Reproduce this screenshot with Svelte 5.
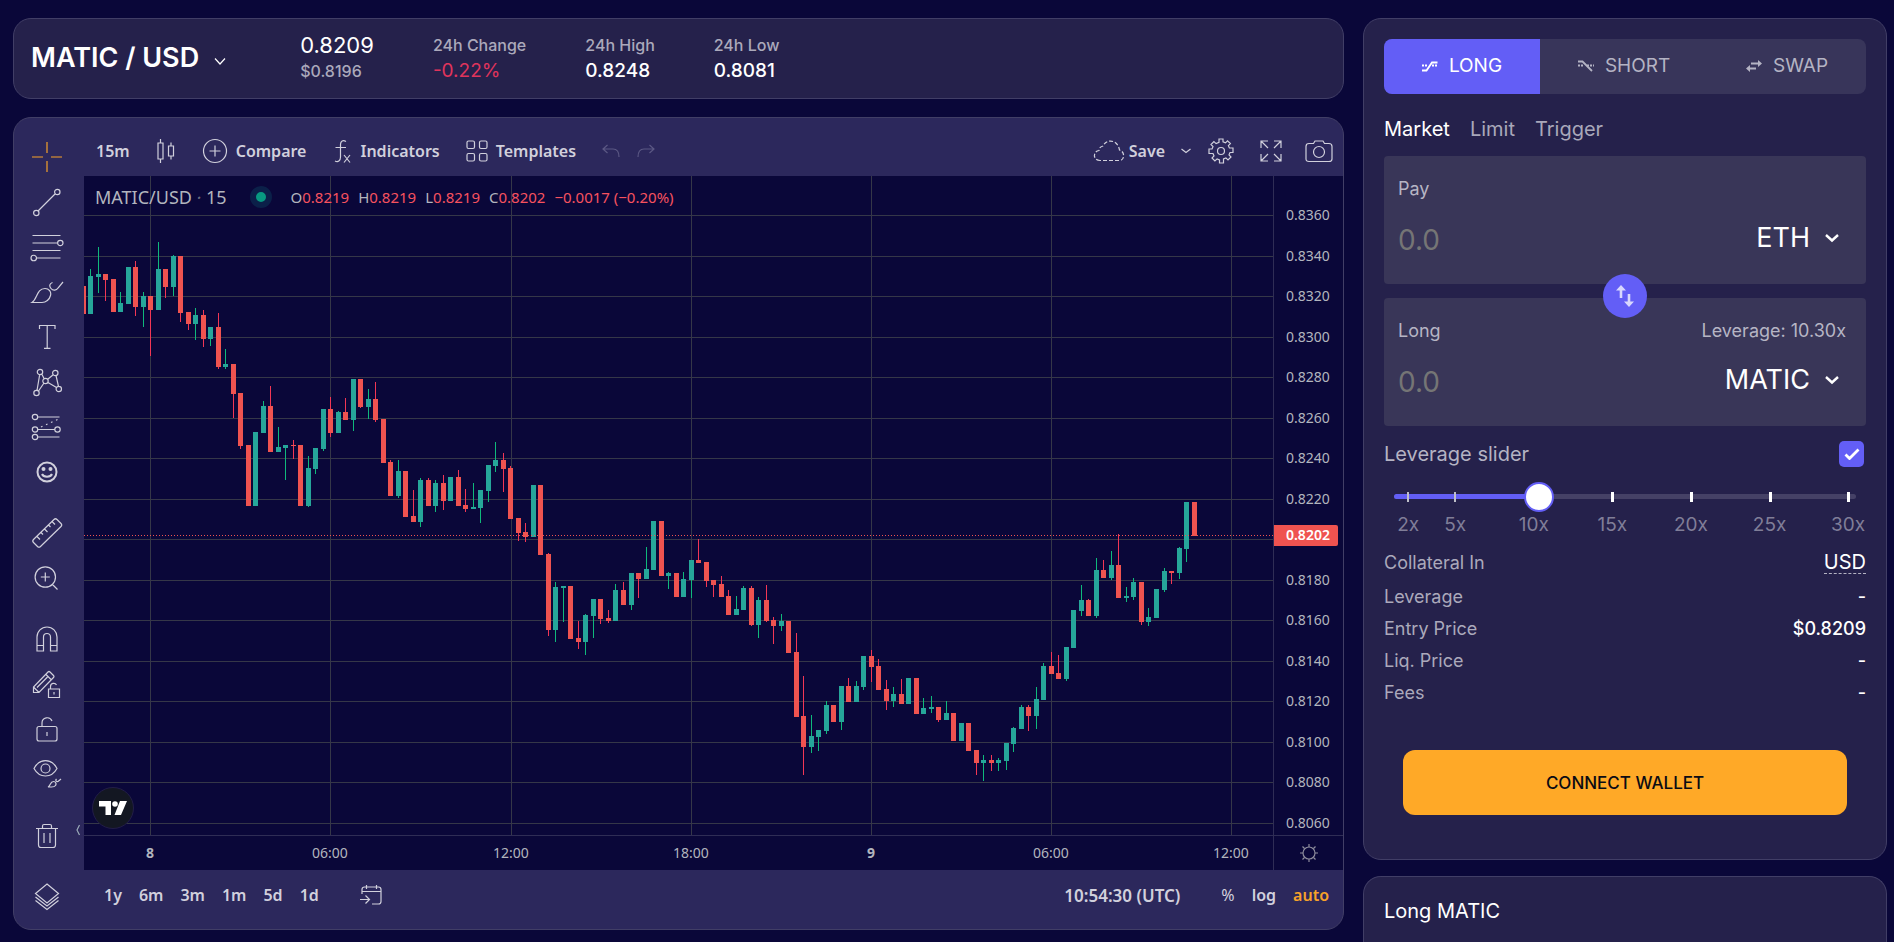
<script>
	const priceTop = 0.836;
	const rowStep = 40.52;
	const priceLines = Array.from({ length: 16 }, (_, i) => ({
		y: Math.round(39 + rowStep * i),
		label: (priceTop - i * 0.002).toFixed(4)
	}));
	const lastY = 359;

	const timeLines = [
		{ x: 66, label: '8', bold: true },
		{ x: 246, label: '06:00' },
		{ x: 427, label: '12:00' },
		{ x: 607, label: '18:00' },
		{ x: 787, label: '9', bold: true },
		{ x: 967, label: '06:00' },
		{ x: 1147, label: '12:00' }
	];

	// direction, high, body top, body bottom, low (y inside the pane)
	const bars = `r 110 110 138 138|g 93 100 138 138|g 71 98 101 117|r 98 98 104 125|r 103 103 136 136|g 116 127 136 136|g 91 91 128 128|r 85 91 131 140|g 116 120 131 151|r 120 120 134 180
g 66 93 134 134|r 93 93 111 122|g 79 80 111 120|r 80 80 137 146|r 136 136 148 154|g 132 139 148 164|r 134 139 163 171|g 151 151 163 170|r 137 151 191 193|g 173 188 191 193
r 188 188 218 242|r 217 217 270 273|r 269 269 330 330|g 256 256 330 330|g 225 230 257 257|r 210 230 276 276|g 251 271 276 276|g 269 269 272 304|r 264 269 270 283|r 269 269 330 330
g 280 292 330 331|g 272 272 293 298|g 233 233 273 275|r 221 233 257 261|g 235 236 257 257|r 222 236 244 244|g 203 203 244 255|r 203 203 231 232|g 213 223 231 243|r 206 223 244 246
r 243 243 287 287|r 284 286 320 320|g 284 295 320 322|r 295 295 341 341|r 314 340 346 346|g 302 304 346 351|r 302 304 330 330|g 304 307 330 336|r 299 307 325 334|g 301 301 325 325
r 294 301 330 330|r 313 329 333 336|g 307 331 333 333|g 314 314 332 347|g 289 289 315 326|g 266 284 290 296|r 277 284 293 316|r 290 292 343 343|r 342 342 357 365|r 347 356 361 366
g 309 309 361 361|r 309 309 379 379|r 377 378 454 460|g 406 411 454 466|g 410 410 412 446|r 410 410 463 463|r 445 462 466 473|g 438 439 466 479|g 423 423 440 462|r 423 423 443 448
r 434 442 445 447|g 408 414 445 445|r 406 414 429 429|g 397 397 429 434|r 397 397 403 422|g 371 393 403 403|g 345 345 394 394|r 345 345 400 400|g 396 397 400 413|r 397 397 421 421
g 396 403 421 421|g 384 384 404 422|r 363 384 387 387|r 386 386 405 411|r 404 404 409 421|r 400 408 421 421|r 414 420 439 439|g 420 433 439 439|g 410 412 434 434|r 410 412 449 450
g 421 424 449 462|r 409 424 445 446|r 441 444 450 468|g 438 445 450 455|r 445 445 477 477|r 457 476 541 541|r 500 540 571 599|g 539 560 571 577|g 554 554 561 575|g 525 529 555 558
r 529 529 546 546|g 510 510 546 554|r 502 510 526 526|g 505 510 526 526|g 480 480 511 514|r 474 480 491 506|r 483 490 514 514|r 504 513 525 534|g 511 518 525 531|r 503 518 528 528
g 502 502 528 528|r 502 502 538 538|g 522 532 538 538|g 520 531 533 537|r 531 531 544 546|g 525 537 544 544|r 537 537 565 565|g 547 547 565 565|r 547 547 575 575|r 574 574 587 599
g 579 584 587 605|r 579 584 587 595|g 582 584 587 595|g 567 567 585 594|g 551 552 568 576|g 529 531 553 553|r 529 531 540 555|g 511 523 540 553|g 487 490 524 524|r 476 490 498 498
r 479 497 503 503|g 471 471 503 505|g 434 434 472 472|g 409 424 435 440|r 423 424 440 440|g 382 394 440 442|r 384 394 402 402|g 375 389 402 404|r 358 389 422 422|g 411 420 422 426
g 402 406 421 424|r 406 406 446 449|g 432 441 446 450|g 413 413 442 442|g 392 395 414 416|r 395 395 397 408|g 371 372 397 403|g 326 326 373 386|r 326 326 360 360`;

	const candles = bars.split(/[|\n]/).map((row, i) => {
		const [dir, high, top, bottom, low] = row.trim().split(' ');
		return {
			up: dir === 'g',
			x: Math.floor(7.507 * i - 1),
			high: +high,
			top: +top,
			bottom: +bottom,
			low: +low
		};
	});

	const toolGroups = [
		['cross', 'trend', 'fib', 'brush', 'text', 'pattern', 'forecast', 'smile'],
		['ruler', 'zoom'],
		['magnet', 'pencil', 'lock', 'eye'],
		['trash']
	];

	const toolPaths = {
		cross: 'M2 17h11M21 17h11M17 2v11M17 21v11',
		trend: 'M8.5 25.5 25 9M9 28a2.7 2.7 0 1 1-5.4 0 2.7 2.7 0 0 1 5.4 0zM30 7a2.7 2.7 0 1 1-5.4 0A2.7 2.7 0 0 1 30 7z',
		fib: 'M2.5 5.5h28M2.5 13H27M2.5 20.5h28M6.5 28h24M33 13a2.7 2.7 0 1 1-5.4 0 2.7 2.7 0 0 1 5.4 0zM6.5 28A2.7 2.7 0 1 1 1 28a2.7 2.7 0 0 1 5.5 0z',
		brush: 'M2 27.5c5.5-3.5 4.5-14 13-14 4 0 6.5 3.5 5.5 7-1 4-4.5 7-8.5 7zM22.5 7.5c-3 1-3.5 3.5-1.5 6s5.5 2 7-.5l5-6',
		text: 'M9.5 9V5.5h15.5V9M17.2 5.5v22.5M14 28.3h6.5',
		pattern: 'M9.7 9.5 7 25.5M12 9.5l2 4M18 14l5.5-4.5M18 17.5l8.5 5M26 10.5l2.5 11M8.5 26l5.5-8M12.7 7a2.7 2.7 0 1 1-5.4 0 2.7 2.7 0 0 1 5.4 0zM28 8a2.7 2.7 0 1 1-5.4 0A2.7 2.7 0 0 1 28 8zM18.2 16a2.7 2.7 0 1 1-5.4 0 2.7 2.7 0 0 1 5.4 0zM31.5 24a2.7 2.7 0 1 1-5.4 0 2.7 2.7 0 0 1 5.4 0zM9.2 28a2.7 2.7 0 1 1-5.4 0 2.7 2.7 0 0 1 5.4 0z',
		forecast: 'M8 7h21.5M8 19.5h16.5M8 27h21.5M7.7 7a2.7 2.7 0 1 1-5.4 0 2.7 2.7 0 0 1 5.4 0zM7.7 19.5a2.7 2.7 0 1 1-5.4 0 2.7 2.7 0 0 1 5.4 0zM7.7 27a2.7 2.7 0 1 1-5.4 0 2.7 2.7 0 0 1 5.4 0zM30.2 19.5a2.7 2.7 0 1 1-5.4 0 2.7 2.7 0 0 1 5.4 0zM11 17l1.5-.7M16 14.7l1.5-.7M21 12.5l1.5-.7M26 10.2l1.5-.7',
		smile: '',
		ruler: 'M24 3.5q1.5-1.5 3 0l4 4q1.5 1.5 0 3L10.5 30.5q-1.5 1.5-3 0l-4-4q-1.5-1.5 0-3zM7 20.5l3 3M11 16.5l2 2M14.5 13l3 3M18.5 9l2 2M22 5.5l3 3',
		zoom: 'M25.5 16a10.2 10.2 0 1 1-20.4 0 10.2 10.2 0 0 1 20.4 0zM22.5 23.5l5 5M15.3 11.5v9M10.8 16h9',
		magnet: 'M7 29V15a10 10 0 0 1 20 0v14h-6.5V15a3.5 3.5 0 0 0-7 0v14zM7 23.5h6.5M20.5 23.5H27',
		pencil: 'M3.5 25.5V20L18 5q1-1 2 0l3.5 3.5q1 1 0 2L9 25.5zM3.5 20 9 25.5M16 7.5l5.5 5.5M7 20.5 17.5 10M18.5 22h11v8.5h-11zM20.5 22v-2.5a3.2 3.2 0 0 1 6-1.5M24 25v2.5',
		lock: 'M9 14.5h16q2 0 2 2V27q0 2-2 2H9q-2 0-2-2V16.5q0-2 2-2zM12 14.5V11a5.2 5.2 0 0 1 10-2M17 20v4',
		eye: 'M4 11.5C9.5 1 21.5 1 27 11.5 21.5 21.5 9.5 21.5 4 11.5zM20 11.5a4.5 4.5 0 1 1-9 0 4.5 4.5 0 0 1 9 0zM18 30c2.5-1 2-5.5 5.5-5.5 2.5 0 3 2.5 2 4S23 30 21.5 30zM26.5 22c-1.5 1.5 0 3 1.5 2.5l3-2.5',
		trash: 'M6 10.5h22M8.5 10.5V27q0 2.5 2.5 2.5h12q2.5 0 2.5-2.5V10.5M12.5 10.5V8q0-1.5 1.5-1.5h6q1.5 0 1.5 1.5v2.5M14 15v10M20 15v10',
		layers: 'M17 5 28.5 14.5 17 24 5.5 14.5zM5.5 18 17 27l11.5-9M5.5 21.5 17 30.5l11.5-9'
	};

	const ranges = ['1y', '6m', '3m', '1m', '5d', '1d'];
	const stats = [
		{ label: '24h Change', value: '-0.22%', down: true },
		{ label: '24h High', value: '0.8248' },
		{ label: '24h Low', value: '0.8081' }
	];
	const ohlc = [
		['O', '0.8219'],
		['H', '0.8219'],
		['L', '0.8219'],
		['C', '0.8202']
	];
	const rows = [
		['Leverage', '-'],
		['Entry Price', '$0.8209'],
		['Liq. Price', '-'],
		['Fees', '-']
	];

	const minLeverage = 1.1;
	const maxLeverage = 30.5;
	const marks = [2, 5, 10, 15, 20, 25, 30];

	let leverage = $state(10.3);
	let sliderOn = $state(true);

	function percent(value) {
		return ((value - minLeverage) / (maxLeverage - minLeverage)) * 100;
	}
</script>

<div class="app">
	<main class="left">
		<header class="card ticker">
			<button class="pair">
				MATIC / USD
				<svg width="14" height="14" viewBox="0 0 14 14"><path d="M2 4.5l5 5.5 5-5.5" /></svg>
			</button>
			<div class="stat main">
				<span class="price">0.8209</span>
				<span class="label">$0.8196</span>
			</div>
			{#each stats as stat}
				<div class="stat">
					<span class="label">{stat.label}</span>
					<span class="value" class:down={stat.down}>{stat.value}</span>
				</div>
			{/each}
		</header>

		<section class="card chart">
			<nav class="rail">
				{#each toolGroups as group}
					<div class="group">
						{#each group as tool}
							<button class="tool" class:active={tool === 'cross'} aria-label={tool}>
								<svg width="34" height="34" viewBox="0 0 34 34">
									<path d={toolPaths[tool]} />
									{#if tool === 'smile'}
										<circle class="thick" cx="17" cy="17" r="9.5" />
										<circle class="dot" cx="13.5" cy="14" r="2" />
										<circle class="dot" cx="20.5" cy="14" r="2" />
										<path class="thick" d="M12 19c1.5 3.5 8.5 3.5 10 0" />
									{/if}
								</svg>
							</button>
						{/each}
					</div>
				{/each}
				<button class="tool layers" aria-label="layers">
					<svg width="34" height="34" viewBox="0 0 34 34"><path d={toolPaths.layers} /></svg>
				</button>
				<button class="collapse" aria-label="Hide toolbar">
					<svg width="6" height="12" viewBox="0 0 6 12"><path d="M4.5 1 2 6l2.5 5" /></svg>
				</button>
			</nav>

			<div class="body">
				<div class="toolbar">
					<button class="txt">15m</button>
					<button class="ico bars" aria-label="Candles">
						<svg width="20" height="26" viewBox="0 0 20 26">
							<path d="M2 5h5v16H2zM4.5 1v4M4.5 21v4M12.5 8h5v10h-5zM15 4.5V8M15 18v3.5" />
						</svg>
					</button>
					<button class="txt">
						<svg width="26" height="26" viewBox="0 0 26 26">
							<circle cx="13" cy="13" r="11.5" />
							<path d="M13 7.5v11M7.5 13h11" />
						</svg>
						Compare
					</button>
					<button class="txt fx">
						<svg width="20" height="26" viewBox="0 0 20 26">
							<path d="M14 3.5c-3-2-5.5-.5-5.5 3V19c0 4-2.5 5.5-5.5 4M3.5 9.5H14M12 17l6 7.5M18 17l-6 7.5" />
						</svg>
						Indicators
					</button>
					<button class="txt">
						<svg width="22" height="22" viewBox="0 0 22 22">
							<rect x="1" y="1" width="7.5" height="7.5" rx="1.5" />
							<rect x="13.5" y="1" width="7.5" height="7.5" rx="1.5" />
							<rect x="1" y="13.5" width="7.5" height="7.5" rx="1.5" />
							<rect x="13.5" y="13.5" width="7.5" height="7.5" rx="1.5" />
						</svg>
						Templates
					</button>
					<button class="ico faded" aria-label="Undo">
						<svg width="18" height="14" viewBox="0 0 18 14"><path d="M5.5 1 1 5l4.5 4M1 5h10q6 0 6 8" /></svg>
					</button>
					<button class="ico faded redo" aria-label="Redo">
						<svg width="18" height="14" viewBox="0 0 18 14"><path d="M12.5 1 17 5l-4.5 4M17 5H7Q1 5 1 13" /></svg>
					</button>
					<span class="space"></span>
					<button class="txt save">
						<svg width="32" height="24" viewBox="0 0 32 24">
							<path
								stroke-dasharray="4 2"
								d="M7 21.5c-7 0-7.5-9-1-10C6.5 8 8 7.5 10 7c4-8 15-6 16.5 4 6 2 5 10.5 0 10.5z"
							/>
						</svg>
						Save
					</button>
					<button class="ico" aria-label="Save options">
						<svg width="10" height="6" viewBox="0 0 10 6"><path d="M.5 1 5 4.5 9.5 1" /></svg>
					</button>
					<button class="ico gear" aria-label="Settings">
						<svg width="26" height="26" viewBox="0 0 26 26">
							<path
								d="M11 1h4v2.8l2.5 1 2-2 2.900 2.800-2 2.100 1 2.300H25v4.500h-3l-1 2.300 2 2.200-3 2.900-2.100-2-2.400 1V25h-4v-3.100l-2.400-1-2.200 2-2.900-2.900 2-2.100-1-2.400H1V11h3l1-2.300-2-2.200 2.900-2.900 2.200 2 2.900-1.200z"
							/>
							<circle cx="13" cy="13" r="3.5" />
						</svg>
					</button>
					<button class="ico full" aria-label="Fullscreen">
						<svg width="22" height="22" viewBox="0 0 22 22">
							<path d="M1 8V1h7M14 1h7v7M21 14v7h-7M8 21H1v-7M1 1l7 7M21 1l-7 7M21 21l-7-7M1 21l7-7" />
						</svg>
					</button>
					<button class="ico" aria-label="Snapshot">
						<svg width="28" height="24" viewBox="0 0 28 24">
							<path d="M4 4.5h4.5L10 2h8l1.5 2.5H24q3 0 3 3V20q0 2.5-3 2.5H4Q1 22.5 1 20V7.5q0-3 3-3z" />
							<circle cx="14" cy="13" r="5.5" />
						</svg>
					</button>
				</div>

				<div class="plot">
					<div class="pane">
						<svg class="canvas">
							{#each timeLines as line}
								<rect class="grid" x={line.x} y="0" width="1" height="100%" />
							{/each}
							{#each priceLines as line}
								<rect class="grid" x="0" y={line.y} width="100%" height="1" />
							{/each}
							{#each candles as bar}
								<g class:up={bar.up} class="bar">
									<rect class="wick" x={bar.x} y={bar.high} width="1" height={bar.low - bar.high} />
									<rect x={bar.x - 2} y={bar.top} width="5" height={bar.bottom - bar.top} />
								</g>
							{/each}
							<line class="last" x1="0" x2="100%" y1={lastY + 0.5} y2={lastY + 0.5} />
						</svg>
						<div class="legend">
							<span class="symbol">MATIC/USD <i>·</i> 15</span>
							<span class="status"></span>
							<span class="ohlc">
								{#each ohlc as [key, value]}
									<span>{key}<b>{value}</b></span>
								{/each}
								<b>−0.0017 (−0.20%)</b>
							</span>
						</div>
						<a class="logo" href="#tv" aria-label="TradingView">
							<svg width="28" height="14" viewBox="0 0 28 14">
								<path d="M0 0h12v14H6.5V5.5H0zM21 0h7l-6 14h-6.5z" />
								<circle cx="16" cy="3" r="2.8" />
							</svg>
						</a>
					</div>
					<svg class="prices">
						{#each priceLines as line, i}
							{#if i !== 8}
								<text x="12" y={line.y + 5}>{line.label}</text>
							{/if}
						{/each}
						<rect class="tag" x="-2" y={lastY - 10} width="66" height="21" rx="2" />
						<text class="tag-text" x="12" y={lastY + 5}>0.8202</text>
					</svg>
					<svg class="times">
						{#each timeLines as line}
							<text class:bold={line.bold} x={line.x} y="22">{line.label}</text>
						{/each}
					</svg>
					<button class="corner" aria-label="Scale settings">
						<svg width="20" height="20" viewBox="0 0 20 20">
							<circle cx="10" cy="10" r="6" />
							<path d="M10 1v3M10 16v3M1 10h3M16 10h3M3.5 3.5l2 2M14.5 14.5l2 2M3.5 16.5l2-2M14.5 5.5l2-2" />
						</svg>
					</button>
				</div>

				<div class="bottom">
					{#each ranges as range}
						<button class="txt">{range}</button>
					{/each}
					<button class="ico goto" aria-label="Go to date">
						<svg width="22" height="20" viewBox="0 0 22 20">
							<path d="M2 9V4.5Q2 2 4.5 2h14Q21 2 21 4.5v12q0 2.5-2.5 2.5H12M2 6.5h19M6.5 0v4M16.5 0v4M0 14.5h9M5.5 10.5l4 4-4 4" />
						</svg>
					</button>
					<span class="space"></span>
					<button class="txt clock">10:54:30 (UTC)</button>
					<button class="txt percent">%</button>
					<button class="txt">log</button>
					<button class="txt auto">auto</button>
				</div>
			</div>
		</section>
	</main>

	<aside class="right">
		<form class="card trade">
			<div class="sides">
				<button type="button" class="side active">
					<svg width="16" height="12" viewBox="0 0 16 12">
						<path d="M0 10.5h4.5L10 2.5h5.5" />
						<path stroke-dasharray="2 1" d="M0 5.5h6M10 5.5h6" />
					</svg>
					LONG
				</button>
				<button type="button" class="side">
					<svg width="16" height="12" viewBox="0 0 16 12">
						<path d="M0 1.5h4.5L14 11" />
						<path stroke-dasharray="2 1" d="M0 5.5h6M9 5.5h7" />
					</svg>
					SHORT
				</button>
				<button type="button" class="side">
					<svg width="16" height="12" viewBox="0 0 16 12">
						<path d="M5 3.5h8M3 8.5h7" />
						<path class="fill" d="M12 0l4 3.5L12 7zM4 5v7L0 8.5z" />
					</svg>
					SWAP
				</button>
			</div>

			<div class="orders">
				<button type="button" class="active">Market</button>
				<button type="button">Limit</button>
				<button type="button">Trigger</button>
			</div>

			<div class="boxes">
				<div class="box">
					<div class="line">
						<label for="pay">Pay</label>
					</div>
					<div class="line amount">
						<input id="pay" placeholder="0.0" />
						<select aria-label="Pay token"><option>ETH</option></select>
						<svg width="16" height="10" viewBox="0 0 16 10"><path d="M2 2l6 5.5L14 2" /></svg>
					</div>
				</div>
				<button type="button" class="switch" aria-label="Switch tokens">
					<svg width="20" height="24" viewBox="0 0 20 24">
						<path d="M6 14V4M14 10v10" />
						<path class="fill" d="M1 6.5 6 1l5 5.5zM9 17.5l5 5.5 5-5.5z" />
					</svg>
				</button>
				<div class="box">
					<div class="line">
						<label for="size">Long</label>
						<span>Leverage: {leverage.toFixed(2)}x</span>
					</div>
					<div class="line amount">
						<input id="size" placeholder="0.0" />
						<select aria-label="Long token"><option>MATIC</option></select>
						<svg width="16" height="10" viewBox="0 0 16 10"><path d="M2 2l6 5.5L14 2" /></svg>
					</div>
				</div>
			</div>

			<div class="toggle">
				<label for="slider-on">Leverage slider</label>
				<span class="check">
					<input id="slider-on" type="checkbox" bind:checked={sliderOn} />
					<svg width="16" height="12" viewBox="0 0 16 12"><path d="M1.5 6.5 5.5 10.5 14.5 1.5" /></svg>
				</span>
			</div>

			<div class="slider">
				<div class="track">
					<div class="filled" style="width: {percent(leverage)}%"></div>
				</div>
				{#each marks as mark}
					<span class="mark" class:passed={mark <= leverage} style="left: {percent(mark)}%"></span>
					<span class="mark-label" style="left: {percent(mark)}%">{mark}x</span>
				{/each}
				<input
					type="range"
					aria-label="Leverage"
					min={minLeverage}
					max={maxLeverage}
					step="0.1"
					bind:value={leverage}
				/>
			</div>

			<div class="info">
				<div class="row first">
					<label for="collateral">Collateral In</label>
					<select id="collateral"><option>USD</option></select>
				</div>
				{#each rows as [name, value]}
					<div class="row">
						<span>{name}</span>
						<strong>{value}</strong>
					</div>
				{/each}
			</div>

			<button type="button" class="connect">CONNECT WALLET</button>
		</form>

		<section class="card summary">Long MATIC</section>
	</aside>
</div>

<style>
	:global(body) {
		background: #0a0739;
	}

	.app {
		box-sizing: border-box;
		display: grid;
		grid-template-columns: minmax(0, 1fr) 524px;
		gap: 19px;
		height: 100vh;
		overflow: hidden;
		padding: 18px 7px 0 13px;
		color: #fff;
		font-family: Inter, sans-serif;
		font-size: 16px;
	}

	button,
	input,
	select {
		padding: 0;
		border: 0;
		background: none;
		color: inherit;
		font: inherit;
	}

	button,
	select {
		cursor: pointer;
	}

	svg {
		display: block;
		flex: none;
		fill: none;
		stroke: currentColor;
		stroke-width: 1.2;
	}

	.card {
		box-sizing: border-box;
		border: 1px solid #413e66;
		border-radius: 18px;
		background: #25214b;
	}

	.left,
	.right {
		display: flex;
		flex-direction: column;
	}

	.left {
		gap: 18px;
	}

	.right {
		gap: 16px;
	}

	/* ticker */
	.ticker {
		display: flex;
		align-items: center;
		gap: 59px;
		height: 81px;
		padding: 0 17px 2px;
	}

	.pair {
		display: flex;
		align-items: center;
		gap: 14px;
		margin-right: 14px;
		font-size: 27px;
		font-weight: 600;
	}

	.pair svg {
		margin-top: 6px;
		stroke-width: 1.2;
	}

	.stat {
		display: flex;
		flex-direction: column;
		line-height: 26px;
	}

	.label {
		color: #aba9bb;
		font-weight: 500;
	}

	.price {
		font-size: 22px;
	}

	.value {
		font-size: 19px;
		font-weight: 500;
	}

	.value.down {
		color: #e0345c;
		font-weight: 400;
	}

	/* chart card */
	.chart {
		display: flex;
		overflow: hidden;
		background: #2c285c;
		color: #d1d0dc;
		font-family: 'Trebuchet MS', 'Noto Sans', sans-serif;
	}

	.rail {
		position: relative;
		box-sizing: border-box;
		display: flex;
		flex-direction: column;
		gap: 16px;
		width: 70px;
		padding: 16px 5px 11px 0;
	}

	.group {
		display: flex;
		flex-direction: column;
	}

	.tool {
		display: flex;
		align-items: center;
		justify-content: center;
		height: 45px;
	}

	.tool.active {
		color: #f7a229;
	}

	.tool .thick {
		stroke-width: 2;
	}

	.tool .dot {
		fill: currentColor;
		stroke: none;
	}

	.layers {
		margin-top: auto;
	}

	.collapse {
		position: absolute;
		right: 3px;
		bottom: 93px;
		color: #9aa9b8;
	}

	.body {
		display: flex;
		flex: 1;
		flex-direction: column;
		min-width: 0;
	}

	.toolbar,
	.bottom {
		box-sizing: border-box;
		display: flex;
		align-items: center;
		font-size: 16px;
		font-weight: 600;
	}

	.toolbar {
		gap: 26px;
		height: 58px;
		padding: 8px 10px 0 12px;
	}

	.txt {
		display: flex;
		align-items: center;
		gap: 8px;
	}

	.faded {
		color: #5b5884;
	}

	.redo {
		margin-left: -9px;
	}

	.save {
		gap: 4px;
		margin-right: -10px;
	}

	.gear {
		margin-left: -9px;
	}

	.full {
		margin-right: -3px;
	}

	.space {
		flex: 1;
	}

	.plot {
		display: grid;
		grid-template-columns: minmax(0, 1fr) 70px;
		grid-template-rows: 660px 34px;
		background: #0a0739;
	}

	.pane {
		position: relative;
		overflow: hidden;
	}

	.canvas {
		width: 100%;
		height: 100%;
		stroke: none;
	}

	.grid {
		fill: #353748;
	}

	.bar {
		fill: #ef5350;
	}

	.bar.up {
		fill: #26a69a;
	}

	.wick {
		fill: #f23655;
	}

	.up .wick {
		fill: #0fb97b;
	}

	.last {
		stroke: #ef5350;
		stroke-width: 1;
		stroke-dasharray: 1 2;
	}

	.prices,
	.times {
		width: 100%;
		height: 100%;
		fill: #b2b5be;
		stroke: none;
		font-size: 14px;
	}

	.prices,
	.corner {
		box-sizing: border-box;
		border-left: 1px solid #2f2d55;
	}

	.pane,
	.prices {
		box-sizing: border-box;
		border-bottom: 1px solid #2f2d55;
	}

	.tag {
		fill: #ef5350;
	}

	.tag-text {
		fill: #fff;
		font-weight: 600;
	}

	.times text {
		text-anchor: middle;
	}

	.bold {
		font-weight: 700;
	}

	.corner {
		display: flex;
		align-items: center;
		justify-content: center;
		color: #8e8d9d;
	}

	.legend {
		position: absolute;
		top: 8px;
		left: 11px;
		display: flex;
		align-items: center;
		height: 26px;
		color: #b2b5be;
		font-size: 18px;
	}

	.legend i {
		color: #6b6b80;
	}

	.status {
		width: 10px;
		height: 10px;
		margin: 0 19px 0 23px;
		border: 6px solid #0b2049;
		border-radius: 50%;
		background: #089981;
	}

	.ohlc {
		display: flex;
		gap: 6px;
		font-size: 15px;
	}

	.ohlc {
		gap: 9px;
	}

	.ohlc b {
		color: #f7525f;
		font-weight: 400;
	}

	.logo {
		position: absolute;
		bottom: 6px;
		left: 8px;
		display: flex;
		align-items: center;
		justify-content: center;
		width: 40px;
		height: 40px;
		border: 1px solid #221d48;
		border-radius: 50%;
		background: #131722;
		color: #fff;
	}

	.logo svg {
		fill: currentColor;
		stroke: none;
	}

	.bottom {
		gap: 17px;
		height: 58px;
		padding: 0 14px 8px 20px;
	}

	.goto {
		margin-left: 24px;
	}

	.clock {
		margin-right: 24px;
		font-size: 17px;
	}

	.percent {
		font-weight: 400;
	}

	.auto {
		color: #f7a229;
	}

	/* trade form */
	.trade {
		height: 842px;
		padding: 20px;
	}

	.sides {
		display: grid;
		grid-template-columns: repeat(3, auto);
		overflow: hidden;
		border-radius: 8px;
		background: #38355a;
	}

	.side {
		display: flex;
		align-items: center;
		justify-content: center;
		gap: 11px;
		height: 55px;
		padding-bottom: 2px;
		color: #b4b3c3;
		font-size: 19px;
	}

	.side svg {
		stroke-width: 1.8;
	}

	.side.active {
		background: #635ef6;
		color: #fff;
	}

	.fill {
		fill: currentColor;
		stroke: none;
	}

	.orders {
		display: flex;
		gap: 20px;
		padding: 21px 0 13px;
		color: #a9a8ba;
		font-size: 20px;
		line-height: 28px;
	}

	.orders .active {
		color: #fff;
	}

	.boxes {
		position: relative;
		display: flex;
		flex-direction: column;
		gap: 14px;
	}

	.box {
		box-sizing: border-box;
		height: 128px;
		padding: 19px 20px 0 14px;
		border-radius: 4px;
		background: #393658;
		color: #b6b5c4;
	}

	.line {
		display: flex;
		align-items: center;
		justify-content: space-between;
		font-size: 18px;
		line-height: 28px;
	}

	.amount {
		height: 40px;
		margin-top: 17px;
		color: #fff;
		font-size: 27px;
	}

	.amount input {
		flex: 1;
		min-width: 0;
		outline: none;
		font-size: 28px;
	}

	.amount input::placeholder {
		color: #757575;
	}

	.amount select {
		padding-bottom: 4px;
	}

	.amount svg {
		margin: 0 6px 4px 14px;
		stroke-width: 2.4;
	}

	select {
		appearance: none;
		field-sizing: content;
	}

	.switch {
		position: absolute;
		top: calc(50% - 17px);
		left: calc(50% - 22px);
		display: flex;
		align-items: center;
		justify-content: center;
		width: 44px;
		height: 44px;
		border-radius: 50%;
		background: #635ef6;
		color: #d8d7fd;
	}

	.switch svg {
		stroke-width: 2.6;
	}

	.toggle {
		display: flex;
		align-items: center;
		justify-content: space-between;
		margin-top: 15px;
		padding-right: 2px;
		color: #b4b3c3;
		font-size: 20px;
		line-height: 26px;
	}

	.check {
		position: relative;
		display: flex;
		color: #fff;
	}

	.check input {
		width: 25px;
		height: 26px;
		margin: 0;
		border-radius: 5px;
		background: #38355a;
		appearance: none;
	}

	.check input:checked {
		background: #635ef6;
	}

	.check svg {
		position: absolute;
		top: 7px;
		left: 5px;
		stroke-width: 2.8;
		pointer-events: none;
	}

	.slider {
		position: relative;
		height: 60px;
		margin: 15px 10px 0;
	}

	.track {
		position: absolute;
		top: 12px;
		right: 0;
		left: 0;
		overflow: hidden;
		height: 5px;
		border-radius: 3px;
		background: #454166;
	}

	.filled {
		height: 100%;
		background: #635ef6;
	}

	.mark {
		position: absolute;
		top: 10px;
		width: 3px;
		height: 10px;
		margin-left: -1px;
		background: #fff;
	}

	.mark.passed {
		width: 2px;
		background: #bfbfc9;
	}

	.mark-label {
		position: absolute;
		top: 30px;
		color: #807e98;
		font-size: 19px;
		line-height: 26px;
		transform: translateX(-50%);
	}

	.slider input {
		position: absolute;
		top: 0;
		left: -15px;
		width: calc(100% + 30px);
		height: 30px;
		margin: 0;
		appearance: none;
	}

	.slider input::-webkit-slider-thumb {
		box-sizing: border-box;
		width: 30px;
		height: 30px;
		border: 2px solid #635ef6;
		border-radius: 50%;
		background: #fff;
		appearance: none;
	}

	.info {
		padding-top: 3px;
		color: #aba9bb;
		font-size: 18px;
	}

	.row {
		display: flex;
		align-items: center;
		justify-content: space-between;
		height: 32px;
	}

	.row.first {
		height: 35px;
	}

	.row select {
		border-bottom: 1px dashed #b4b3c3;
		color: #fff;
		font-size: 20px;
		line-height: 22px;
	}

	.row strong {
		color: #fff;
		font-weight: 500;
	}

	.connect {
		display: block;
		width: calc(100% - 38px);
		height: 65px;
		margin: 42px auto 0;
		border-radius: 12px;
		background: #ffa927;
		color: #0b0b14;
		font-size: 17px;
		font-weight: 500;
	}

	.summary {
		flex: 1;
		padding: 20px;
		border-bottom: 0;
		border-radius: 18px 18px 0 0;
		font-size: 20px;
		line-height: 28px;
	}
</style>
